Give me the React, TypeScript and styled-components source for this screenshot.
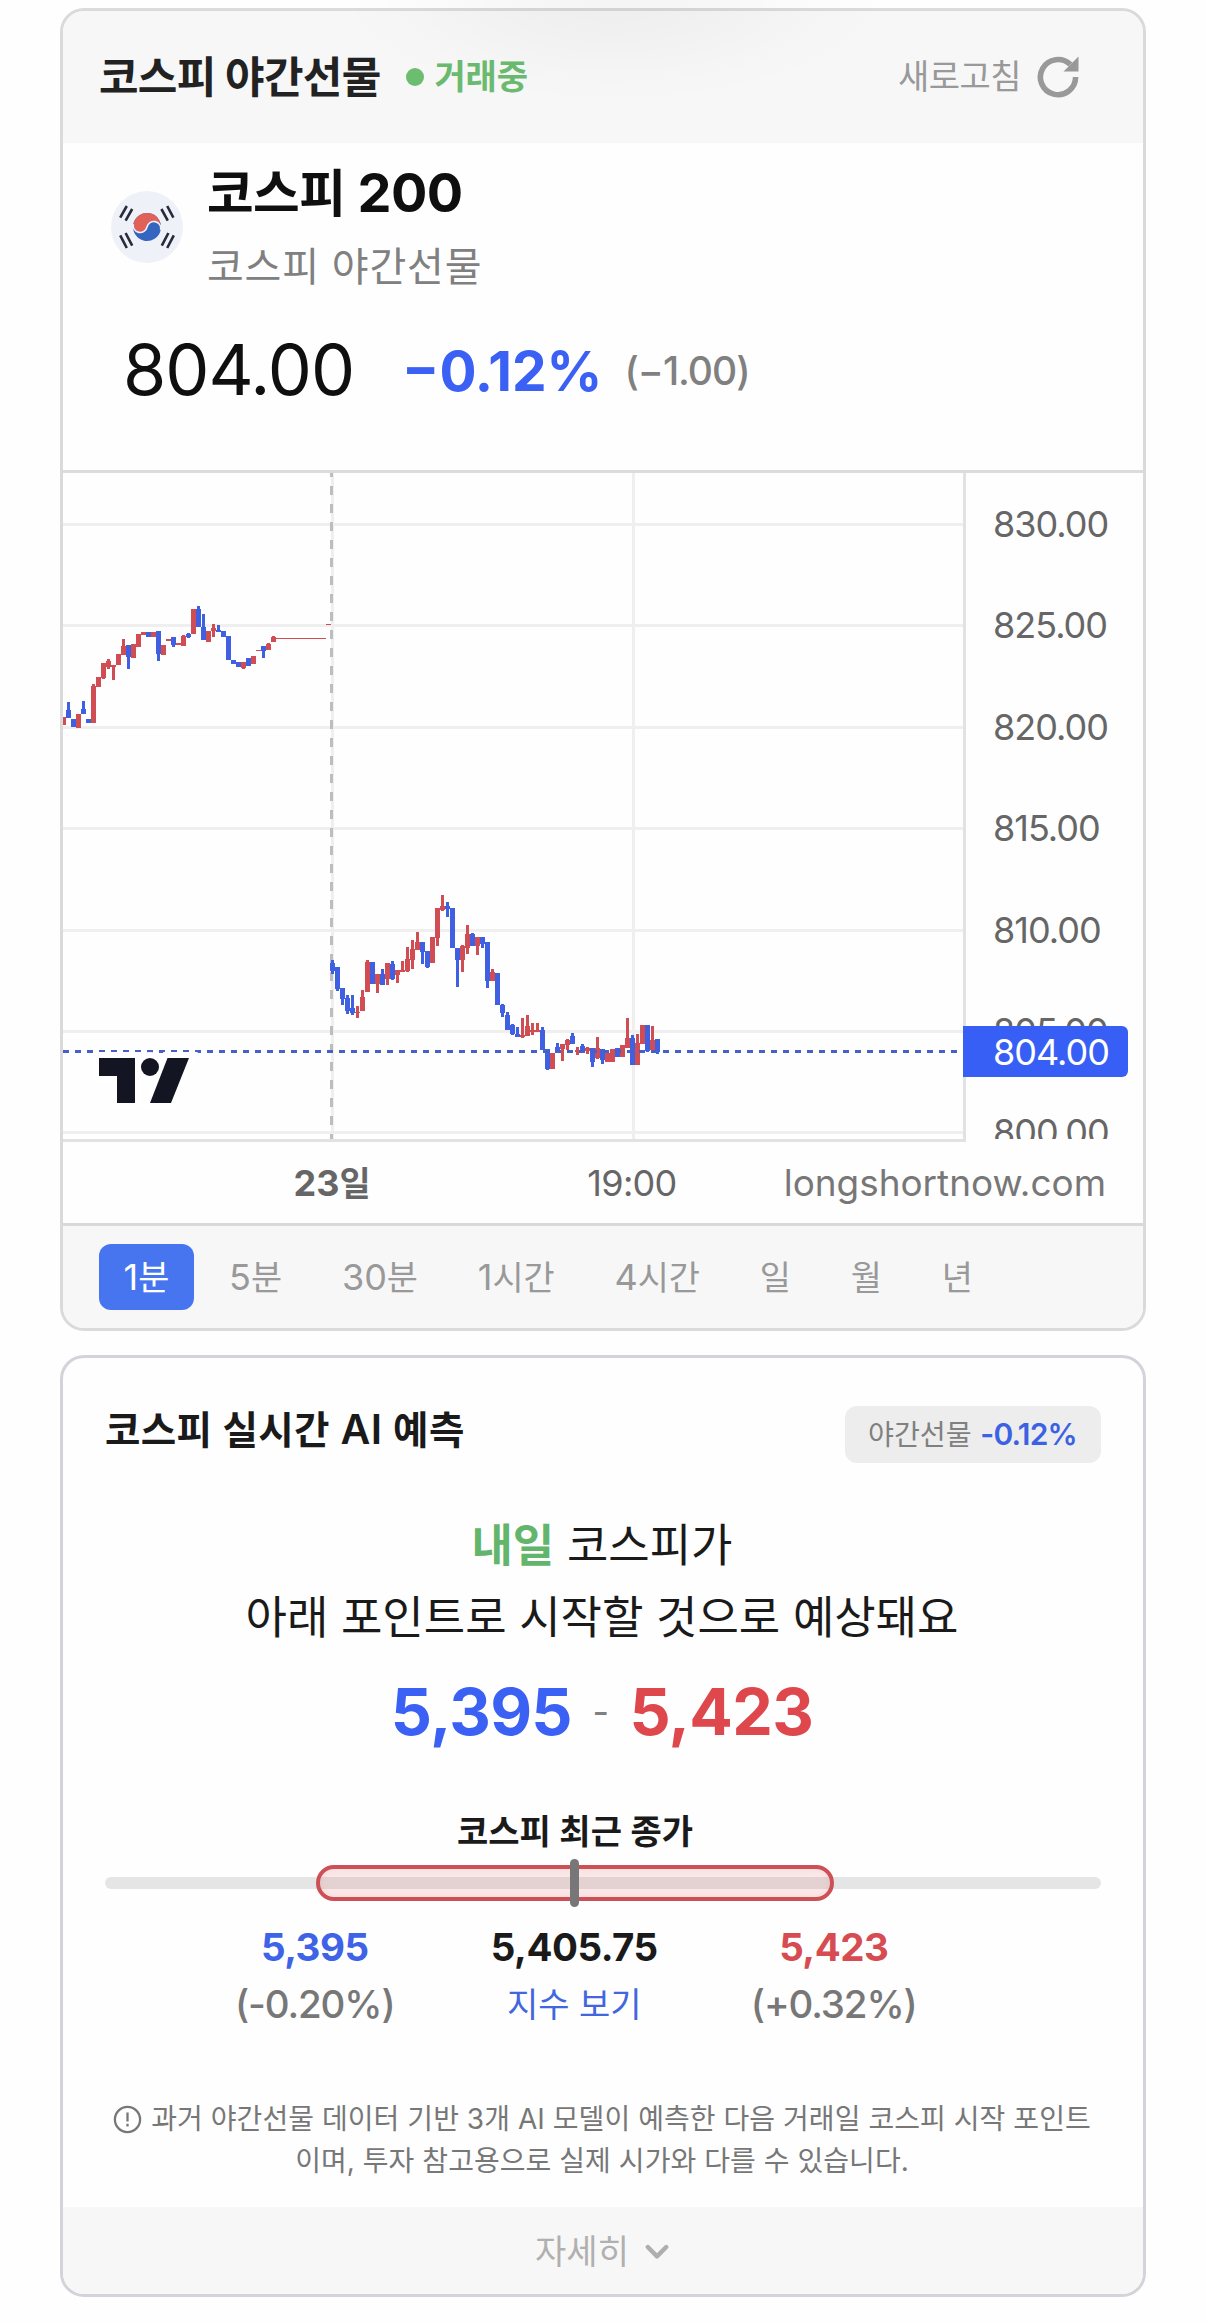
import React from "react";
import styled, { createGlobalStyle } from "styled-components";

const FONT = `Inter, "Noto Sans CJK KR", "Noto Sans", sans-serif`;
const BLUE = "#3a60f4";
const RED = "#de484d";

const GlobalStyle = createGlobalStyle`
  * { box-sizing: border-box; }
  body { margin: 0; background: #fefefe; font-family: ${FONT}; -webkit-font-smoothing: antialiased; }
`;

const Page = styled.main`
  position: relative;
  display: flex;
  flex-direction: column;
  gap: 24px;
  width: 1206px;
  height: 2323px;
  padding: 8px 60px 26px;
  overflow: hidden;
`;

const TopShade = styled.div`
  position: absolute;
  inset: 0 0 auto 0;
  height: 120px;
  pointer-events: none;
  background: radial-gradient(ellipse 280px 110px at 613px -6px, rgba(0, 0, 0, 0.04), rgba(0, 0, 0, 0.026) 35%, rgba(0, 0, 0, 0.008) 75%, rgba(0, 0, 0, 0) 100%);
`;

const Card = styled.section<{ $line: string; $fill?: boolean }>`
  display: flex;
  flex: ${(p) => (p.$fill ? "1" : "none")};
  flex-direction: column;
  border: 3px solid ${(p) => p.$line};
  border-radius: 24px;
  background: #fefefe;
  overflow: hidden;
`;

/* Futures card */

const CardHeader = styled.header`
  display: flex;
  align-items: center;
  height: 132px;
  padding: 0 64px 0 36px;
  background: #f7f7f7;
`;

const CardTitle = styled.h2`
  margin: 0;
  font-size: 43px;
  font-weight: 700;
  line-height: 60px;
  letter-spacing: -0.7px;
  color: #222;
  white-space: nowrap;
`;

const Status = styled.div`
  display: flex;
  align-items: center;
  gap: 11px;
  margin-left: 25px;
  font-size: 34px;
  font-weight: 700;
  line-height: 40px;
  letter-spacing: -0.2px;
  color: #6aba6f;
`;

const StatusDot = styled.i`
  width: 18px;
  height: 18px;
  border-radius: 50%;
  background: #6cbd70;
`;

const RefreshButton = styled.button`
  display: flex;
  align-items: center;
  gap: 16px;
  margin-left: auto;
  padding: 0;
  border: 0;
  background: none;
  font-family: inherit;
  font-size: 34px;
  line-height: 40px;
  letter-spacing: -0.5px;
  color: #999;
`;

const Quote = styled.div`
  display: flex;
  flex-direction: column;
  height: 327px;
  padding: 19px 48px 0;
`;

const Instrument = styled.div`
  display: flex;
  align-items: center;
  gap: 24px;
`;

const InstrumentName = styled.div`
  font-size: 54px;
  font-weight: 700;
  line-height: 61px;
  letter-spacing: -0.6px;
  color: #0f0f0f;
`;

const InstrumentSub = styled.div`
  margin-top: 19px;
  font-size: 40px;
  line-height: 50px;
  letter-spacing: 0.8px;
  color: #808080;
`;

const Ko = styled.span`
  font-size: 0.94em;
  line-height: 0;
`;

const PriceRow = styled.div`
  display: flex;
  align-items: center;
  height: 80px;
  margin-top: 38px;
  padding-left: 12px;
  white-space: nowrap;
`;

const Price = styled.span`
  font-size: 70px;
  line-height: 80px;
  letter-spacing: -1px;
  color: #0f0f0f;
`;

const Change = styled.span`
  margin: 2px 0 0 48px;
  font-size: 55px;
  font-weight: 700;
  line-height: 80px;
  color: ${BLUE};
`;

const ChangeAbs = styled.span`
  margin: 2px 0 0 22px;
  font-size: 39px;
  font-weight: 500;
  line-height: 80px;
  letter-spacing: -1px;
  color: #808080;
`;

const ChartRow = styled.div`
  display: flex;
  align-items: flex-start;
  border-top: 3px solid #dcdcdc;
`;

const Plot = styled.div`
  width: 903px;
  height: 669px;
  border-right: 3px solid #e2e2e2;
  border-bottom: 3px solid #e2e2e2;
  svg { display: block; }
`;

const PriceAxis = styled.div`
  position: relative;
  flex: 1;
  height: 666px;
`;

const AxisLabels = styled.div`
  height: 666px;
  padding: 1px 0 0 27px;
  overflow: hidden;
`;

const AxisLabel = styled.div`
  height: 101.4px;
  font-size: 36px;
  line-height: 101.4px;
  letter-spacing: -1px;
  color: #666;
`;

const PriceTag = styled.div`
  position: absolute;
  left: -3px;
  top: 553px;
  width: 165px;
  height: 51px;
  padding-left: 30px;
  border-radius: 0 6px 6px 0;
  background: #385ff5;
  font-size: 36px;
  line-height: 53px;
  letter-spacing: -1px;
  color: #fff;
`;

const TimeAxis = styled.div`
  display: flex;
  align-items: center;
  height: 81px;
  padding: 0 37px 0 194px;
  font-size: 36px;
  line-height: 44px;
  color: #666;
`;

const TimeTick = styled.span<{ $bold?: boolean; $offset?: number }>`
  width: 150px;
  margin-left: ${(p) => p.$offset ?? 0}px;
  text-align: center;
  font-weight: ${(p) => (p.$bold ? 700 : 400)};
  letter-spacing: ${(p) => (p.$bold ? 0 : -0.7)}px;
`;

const Site = styled.span`
  margin-left: auto;
  font-size: 36.9px;
  color: #777;
`;

const Tabs = styled.nav`
  display: flex;
  gap: 10.8px;
  height: 105px;
  padding: 18px 36px;
  border-top: 3px solid #d9d9d9;
  background: #f7f7f8;
`;

const Tab = styled.button<{ $active?: boolean }>`
  height: 66px;
  padding: 0 24.5px;
  border: 0;
  border-radius: 12px;
  background: ${(p) => (p.$active ? "#4775f0" : "transparent")};
  color: ${(p) => (p.$active ? "#fff" : "#999")};
  font-family: inherit;
  font-size: 36px;
  line-height: 65px;
  white-space: nowrap;
`;

/* Forecast card */

const ForecastHead = styled.div`
  display: flex;
  align-items: flex-start;
  justify-content: space-between;
  height: 105px;
  padding: 48px 42px 0;
`;

const ForecastTitle = styled.h2`
  margin: 0;
  font-size: 41px;
  font-weight: 600;
  line-height: 47px;
  letter-spacing: 0.35px;
  color: #1a1a1a;
`;

const Badge = styled.div`
  height: 57px;
  padding: 0 24px 0 23px;
  border-radius: 12px;
  background: #ededed;
  font-size: 30px;
  line-height: 57px;
  color: #808080;
  white-space: nowrap;
  b { font-weight: 600; letter-spacing: -0.75px; color: #3c62e4; }
`;

const Headline = styled.p`
  margin: 47px 0 0;
  padding-right: 2px;
  text-align: center;
  font-size: 45px;
  line-height: 72px;
  color: #1a1a1a;
  b { font-weight: 700; color: #63b56c; }
`;

const RangeText = styled.div`
  display: flex;
  justify-content: center;
  align-items: center;
  gap: 20.5px;
  height: 80px;
  margin-top: 18px;
  padding-right: 2px;
  font-size: 64.5px;
  font-weight: 700;
  line-height: 80px;
  letter-spacing: -0.7px;
`;

const Tone = styled.span<{ $color: string }>`
  color: ${(p) => p.$color};
`;

const Dash = styled.span`
  font-size: 36px;
  font-weight: 400;
  letter-spacing: 0;
  color: #808080;
`;

const Gauge = styled.div`
  margin: 60px 42px 0;
`;

const GaugeCaption = styled.div`
  width: 940px;
  text-align: center;
  font-size: 34px;
  font-weight: 600;
  line-height: 40px;
  color: #1a1a1a;
`;

const Track = styled.div`
  position: relative;
  height: 48px;
  margin-top: 7px;
  &::before {
    content: "";
    position: absolute;
    inset: 18px 0;
    border-radius: 6px;
    background: #e5e5e5;
  }
`;

const Range = styled.div`
  position: absolute;
  left: 211px;
  top: 6px;
  width: 518px;
  height: 36px;
  border: 4px solid #cc5056;
  border-radius: 18px;
  background: rgba(222, 72, 77, 0.12);
  box-shadow: inset 0 0 6px rgba(222, 72, 77, 0.1);
`;

const Marker = styled.div`
  position: absolute;
  left: 465px;
  top: 0;
  width: 9px;
  height: 48px;
  border-radius: 4.5px;
  background: #777;
`;

const GaugeLabels = styled.div`
  display: grid;
  grid-template-columns: repeat(3, 259.5px);
  margin-top: 12px;
  padding-left: 80px;
  text-align: center;
`;

const GaugeValue = styled.div<{ $color: string }>`
  font-size: 38.5px;
  font-weight: 700;
  line-height: 57px;
  letter-spacing: -0.5px;
  color: ${(p) => p.$color};
`;

const GaugeSub = styled.div<{ $link?: boolean }>`
  font-size: ${(p) => (p.$link ? 34 : 38.5)}px;
  font-weight: ${(p) => (p.$link ? 400 : 500)};
  line-height: 57px;
  letter-spacing: ${(p) => (p.$link ? 0 : -1.1)}px;
  color: ${(p) => (p.$link ? "#4266dd" : "#777")};
`;

const Note = styled.div`
  margin-top: 65px;
  padding-right: 2px;
  text-align: center;
  font-size: 28px;
  line-height: 42px;
  letter-spacing: 0.05px;
  color: #777;
`;

const NoteLine = styled.div`
  display: flex;
  align-items: center;
  justify-content: center;
  gap: 9px;
  height: 42px;
  white-space: nowrap;
`;

const MoreButton = styled.button`
  display: flex;
  align-items: center;
  justify-content: center;
  gap: 16px;
  height: 87px;
  margin-top: auto;
  padding: 2px 2px 0 0;
  border: 0;
  background: #f7f7f7;
  font-family: inherit;
  font-size: 34px;
  line-height: 40px;
  color: #b0b0b0;
`;

/* Icons */

const RefreshIcon = () => (
  <svg width="42" height="42" viewBox="0 0 42 42">
    <path d="M38.6 21A17.6 17.6 0 1 1 33.4 8.6" fill="none" stroke="#999" strokeWidth="5.6" />
    <path d="M41.5 0.5V15.5H26.5Z" fill="#999" />
  </svg>
);

const KoreaFlag = () => (
  <svg width="72" height="72" viewBox="0 0 72 72">
    <circle cx="36" cy="36" r="36" fill="#eef1f8" />
    <g transform="rotate(12 36 36)">
      <circle cx="36" cy="36" r="14" fill="#3465bf" />
      <path d="M22 36a14 14 0 0 1 28 0a7 7 0 0 0-14 0a7 7 0 0 1-14 0Z" fill="#df6158" />
      <path d="M22 36a7 7 0 0 0 14 0a7 7 0 0 1 14 0" fill="none" stroke="#eef1f8" strokeWidth="1.6" />
    </g>
    <g stroke="#272b3a" strokeWidth="2.6">
      <path d="M9.2 26.6L15.8 15M14.6 29.6L21.2 18" />
      <path d="M56.2 15L62.4 26.6M50.4 18L56.8 29.6" />
      <path d="M9.2 44.4L15.8 57M14.6 42L21.2 54.6" />
      <path d="M62.8 44.4L56.2 57M57.4 42L50.8 54.6" />
    </g>
  </svg>
);

const AlertIcon = () => (
  <svg width="29" height="29" viewBox="0 0 29 29" fill="none" stroke="#777" strokeWidth="2.3">
    <circle cx="14.5" cy="14.5" r="12.6" />
    <path d="M14.5 7.6V16.4" />
    <path d="M14.5 18.8V21.4" />
  </svg>
);

const ChevronIcon = () => (
  <svg width="24" height="16" viewBox="0 0 24 16" fill="none" stroke="#aeaeae" strokeWidth="4.4" strokeLinecap="round" strokeLinejoin="round">
    <path d="M2.8 3L12 12.4L21.2 3" />
  </svg>
);

/* Candles: [colour, body top, body bottom, high, low], in thirds of a pixel */

type Candle = [string, number, number, number?, number?];

const SESSION_A: Candle[] = [
  ["r", 410, 434], ["b", 390, 413, 366], ["b", 417, 440], ["r", 402, 444], ["b", 387, 402, 363],
  ["b", 417, 429], ["r", 318, 429, 312], ["r", 290, 321], ["r", 249, 294, 249, 297], ["r", 243, 261, 237, 266],
  ["r", 255, 261, 255, 300], ["r", 222, 255], ["r", 198, 225, 177], ["b", 195, 231, 195, 267], ["r", 192, 234],
  ["r", 162, 201], ["r", 156, 165], ["b", 156, 171], ["r", 156, 171], ["b", 153, 222, 153, 242],
  ["r", 195, 225], ["r", 177, 182], ["b", 171, 195, 171, 200], ["r", 189, 194], ["r", 168, 198, 165],
  ["b", 162, 170, 158, 174], ["r", 87, 162], ["b", 87, 141, 78], ["b", 141, 180, 102], ["r", 153, 186],
  ["r", 144, 153, 132, 171], ["b", 150, 156, 135], ["b", 153, 171], ["b", 168, 240], ["b", 240, 252],
  ["b", 246, 261], ["r", 246, 264, 246, 267], ["b", 234, 258], ["r", 228, 252], ["r", 210, 213],
  ["b", 198, 213, 198, 234], ["r", 192, 210, 189], ["r", 171, 186, 168],
];

const SESSION_B: Candle[] = [
  ["b", 279, 303, 270, 312], ["b", 291, 356, 291, 362], ["b", 354, 387, 354, 405], ["b", 384, 423, 375, 433], ["b", 414, 430, 375, 434],
  ["r", 426, 429, 408, 444], ["r", 381, 423, 360], ["r", 276, 366, 270], ["b", 276, 342], ["r", 312, 342, 312, 369],
  ["b", 312, 345, 297], ["r", 279, 327, 279, 345], ["b", 282, 327, 273, 330], ["r", 300, 315, 300, 339], ["r", 300, 305, 273],
  ["r", 267, 303, 231, 306], ["r", 237, 270, 210, 297], ["r", 216, 240, 186], ["b", 216, 246, 216, 282], ["b", 243, 291, 243, 294],
  ["r", 201, 279], ["r", 114, 204, 114, 228], ["r", 108, 121, 75, 123], ["b", 108, 117, 96, 141], ["b", 114, 234],
  ["b", 234, 270, 234, 351], ["r", 227, 270, 225, 306], ["r", 192, 234, 165, 252], ["b", 192, 228, 189], ["r", 201, 228, 201, 255],
  ["b", 201, 222, 201, 234], ["b", 216, 333, 216, 354], ["r", 306, 333, 297], ["b", 309, 405], ["b", 405, 429, 402, 441],
  ["b", 435, 480, 426], ["b", 465, 492, 462, 495], ["b", 492, 500, 471], ["r", 495, 501, 444, 504], ["r", 468, 498, 435],
  ["r", 480, 486, 459, 495], ["r", 480, 486, 459], ["b", 480, 540, 471], ["b", 537, 597, 537, 600], ["r", 549, 597],
  ["b", 530, 543, 519], ["r", 522, 537, 522, 573], ["r", 510, 525, 507, 540], ["b", 498, 522, 489], ["r", 540, 546, 531, 555],
  ["b", 528, 543, 522], ["r", 534, 543, 531, 552], ["b", 534, 576, 534, 591], ["r", 534, 564, 501, 567], ["b", 537, 570, 537, 582],
  ["r", 549, 576], ["r", 537, 576], ["b", 534, 560], ["r", 525, 560], ["r", 504, 534, 444],
  ["b", 504, 585, 495], ["r", 519, 585, 492], ["r", 465, 522], ["b", 465, 543, 465, 546], ["r", 510, 540, 468],
  ["b", 507, 546, 507, 552],
];

const CandleSeries = ({ data, x0, y0 }: { data: Candle[]; x0: number; y0: number }) => (
  <g shapeRendering="crispEdges">
    {data.map(([tone, top, bottom, high = top, low = bottom], i) => {
      const x = Math.round(x0 + i * 5 - 0.5);
      const fill = tone === "r" ? "#d04d53" : "#3f61e1";
      return (
        <g key={i} fill={fill}>
          <rect x={x - 2} y={y0 + top / 3} width={5} height={(bottom - top) / 3} />
          <rect x={x - 1} y={y0 + high / 3} width={3} height={(low - high) / 3} />
        </g>
      );
    })}
  </g>
);

const GRID_Y = [50, 151, 253, 354, 456, 557, 658];

const PriceChart = () => (
  <svg width="900" height="666" viewBox="0 0 900 666">
    <g fill="#efefef">
      {GRID_Y.map((y) => (
        <rect key={y} x="0" y={y} width="900" height="3" />
      ))}
      <rect x="268" y="0" width="3" height="666" />
      <rect x="569" y="0" width="3" height="666" />
    </g>
    <path d="M268.5 -5V666" stroke="#bdbdbd" strokeWidth="3" strokeDasharray="9 9" />
    <CandleSeries data={SESSION_A} x0={0.3} y0={107} />
    <g fill="#d04d53" shapeRendering="crispEdges">
      <rect x="213" y="165" width="50" height="1" />
      <rect x="263" y="151" width="5" height="1" />
    </g>
    <CandleSeries data={SESSION_B} x0={269.6} y0={397} />
    <path d="M0 578.5H900" stroke="#4560c6" strokeWidth="3" strokeDasharray="6 6" />
    <g stroke="#fff" strokeWidth="12" fill="#131622">
      <path d="M36 585H72V630H54V603H36Z" />
      <circle cx="87" cy="594" r="9" />
      <path d="M104.5 585H126L108 630H87Z" />
    </g>
    <g fill="#131622">
      <path d="M36 585H72V630H54V603H36Z" />
      <circle cx="87" cy="594" r="9" />
      <path d="M104.5 585H126L108 630H87Z" />
    </g>
  </svg>
);

const PRICE_TICKS = ["830.00", "825.00", "820.00", "815.00", "810.00", "805.00", "800.00"];

export default function App() {
  return (
    <>
      <GlobalStyle />
      <Page>
        <Card $line="#dadada">
          <CardHeader>
            <CardTitle>코스피 야간선물</CardTitle>
            <Status>
              <StatusDot />
              거래중
            </Status>
            <RefreshButton>
              새로고침
              <RefreshIcon />
            </RefreshButton>
          </CardHeader>
          <Quote>
            <Instrument>
              <KoreaFlag />
              <div>
                <InstrumentName>
                  <Ko>코스피</Ko> 200
                </InstrumentName>
                <InstrumentSub>코스피 야간선물</InstrumentSub>
              </div>
            </Instrument>
            <PriceRow>
              <Price>804.00</Price>
              <Change>−0.12%</Change>
              <ChangeAbs>(−1.00)</ChangeAbs>
            </PriceRow>
          </Quote>
          <ChartRow>
            <Plot>
              <PriceChart />
            </Plot>
            <PriceAxis>
              <AxisLabels>
                {PRICE_TICKS.map((t) => (
                  <AxisLabel key={t}>{t}</AxisLabel>
                ))}
              </AxisLabels>
              <PriceTag>804.00</PriceTag>
            </PriceAxis>
          </ChartRow>
          <TimeAxis>
            <TimeTick $bold>
              23<Ko>일</Ko>
            </TimeTick>
            <TimeTick $offset={150}>19:00</TimeTick>
            <Site>longshortnow.com</Site>
          </TimeAxis>
          <Tabs>
            <Tab $active>1<Ko>분</Ko></Tab>
            <Tab>5<Ko>분</Ko></Tab>
            <Tab>30<Ko>분</Ko></Tab>
            <Tab>1<Ko>시간</Ko></Tab>
            <Tab>4<Ko>시간</Ko></Tab>
            <Tab><Ko>일</Ko></Tab>
            <Tab><Ko>월</Ko></Tab>
            <Tab><Ko>년</Ko></Tab>
          </Tabs>
        </Card>

        <Card $line="#d2d4d9" $fill>
          <ForecastHead>
            <ForecastTitle>
              <Ko>코스피 실시간</Ko> AI <Ko>예측</Ko>
            </ForecastTitle>
            <Badge>
              <Ko>야간선물</Ko> <b>-0.12%</b>
            </Badge>
          </ForecastHead>
          <Headline>
            <b>내일</b> 코스피가
            <br />
            아래 포인트로 시작할 것으로 예상돼요
          </Headline>
          <RangeText>
            <Tone $color={BLUE}>5,395</Tone>
            <Dash>-</Dash>
            <Tone $color={RED}>5,423</Tone>
          </RangeText>
          <Gauge>
            <GaugeCaption>코스피 최근 종가</GaugeCaption>
            <Track>
              <Range />
              <Marker />
            </Track>
            <GaugeLabels>
              <div>
                <GaugeValue $color="#3f63e6">5,395</GaugeValue>
                <GaugeSub>(-0.20%)</GaugeSub>
              </div>
              <div>
                <GaugeValue $color="#1a1a1a">5,405.75</GaugeValue>
                <GaugeSub $link>지수 보기</GaugeSub>
              </div>
              <div>
                <GaugeValue $color="#d64c51">5,423</GaugeValue>
                <GaugeSub>(+0.32%)</GaugeSub>
              </div>
            </GaugeLabels>
          </Gauge>
          <Note>
            <NoteLine>
              <AlertIcon />
              과거 야간선물 데이터 기반 3개 AI 모델이 예측한 다음 거래일 코스피 시작 포인트
            </NoteLine>
            <NoteLine>이며, 투자 참고용으로 실제 시가와 다를 수 있습니다.</NoteLine>
          </Note>
          <MoreButton>
            자세히
            <ChevronIcon />
          </MoreButton>
        </Card>
        <TopShade />
      </Page>
    </>
  );
}
